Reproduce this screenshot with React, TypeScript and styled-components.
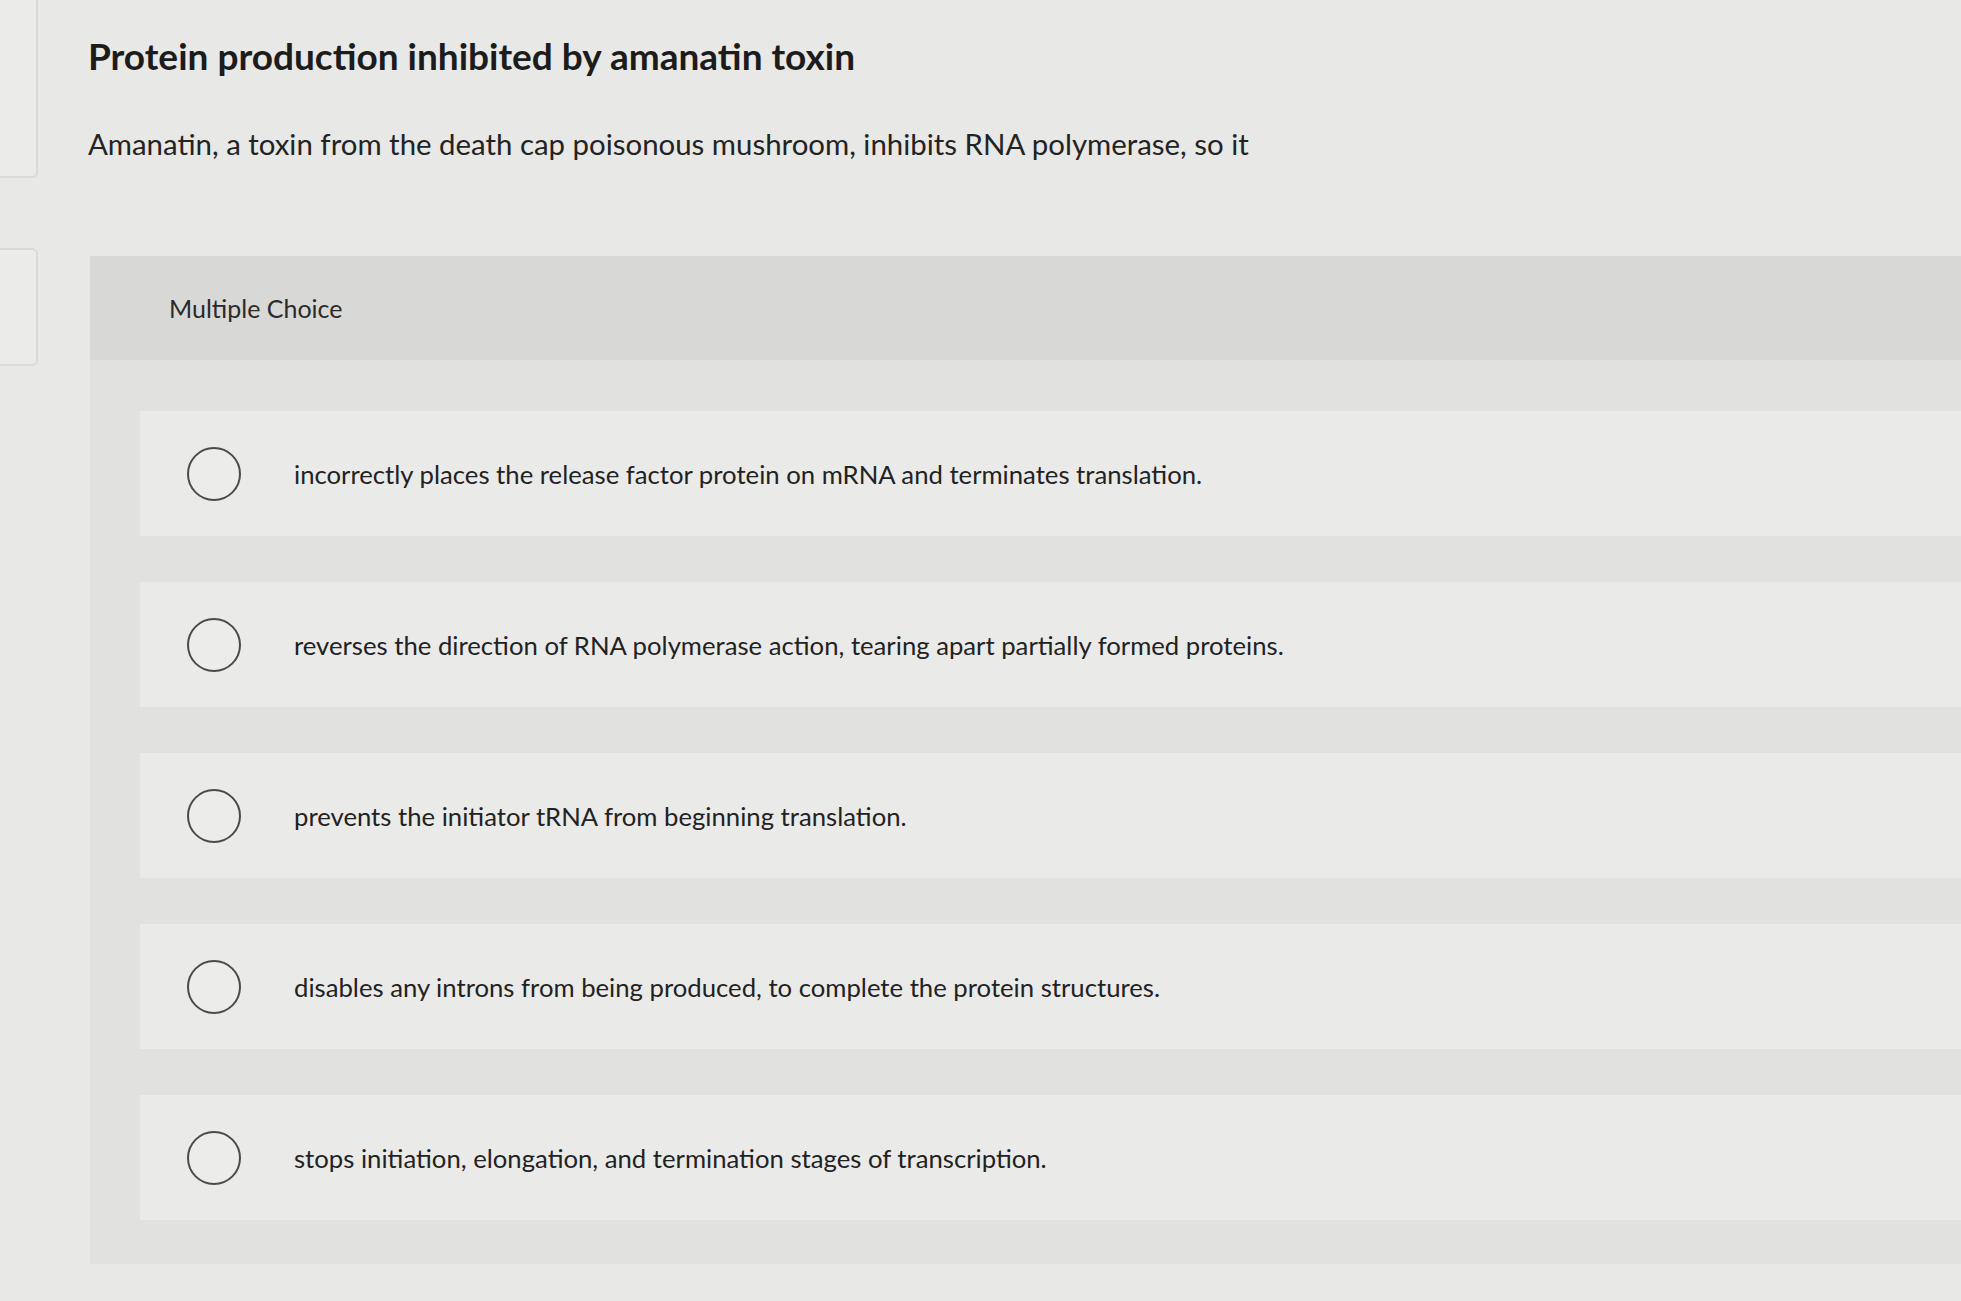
import React from "react";
import styled, { createGlobalStyle } from "styled-components";

const Global = createGlobalStyle`
  html, body { margin: 0; padding: 0; background: #e8e8e6; }
  body { font-family: "Lato", "Open Sans", sans-serif; color: #222; }
`;

const Page = styled.div`
  display: flex;
  min-height: 1301px;
  background: #e8e8e6;
  overflow: hidden;
`;

const Sidebar = styled.div`
  width: 38px;
  flex: none;
  display: flex;
  flex-direction: column;
  gap: 70px;
`;

const SideTab = styled.div<{ $h: number; $top?: number }>`
  height: ${(p) => p.$h}px;
  margin-top: ${(p) => p.$top ?? 0}px;
  margin-left: -8px;
  border: 2px solid #d9d9d7;
  border-left: none;
  border-radius: 0 6px 6px 0;
  background: #ebebe9;
`;

const Main = styled.div`
  flex: 1;
  padding-left: 50px;
  display: flex;
  flex-direction: column;
`;

const Title = styled.h1`
  margin: 34px 0 0;
  font-size: 37px;
  line-height: 44px;
  font-weight: 700;
  color: #1c1c1c;
`;

const Prompt = styled.p`
  margin: 48px 0 0;
  font-size: 29.4px;
  line-height: 36px;
  font-weight: 400;
  color: #232323;
`;

const Panel = styled.section`
  margin: 94px 0 0 2px;
  background: #e1e1e0;
  padding-bottom: 44px;
  display: flex;
  flex-direction: column;
`;

const PanelHeader = styled.div`
  height: 104px;
  background: #d8d8d7;
  display: flex;
  align-items: center;
  padding-left: 79px;
  font-size: 25px;
  color: #2a2a2a;
`;

const Options = styled.div`
  display: flex;
  flex-direction: column;
  gap: 46px;
  padding: 51px 0 0 50px;
`;

const Option = styled.label`
  height: 125px;
  background: #eaeae9;
  display: flex;
  align-items: center;
  padding-left: 47px;
  gap: 53px;
  cursor: pointer;
`;

const Radio = styled.span`
  width: 50px;
  height: 50px;
  flex: none;
  border-radius: 50%;
  border: 2px solid #4a4a4a;
  background: #ececeb;
`;

const OptionText = styled.span`
  font-size: 25.7px;
  line-height: 32px;
  color: #222;
`;

const choices = [
  "incorrectly places the release factor protein on mRNA and terminates translation.",
  "reverses the direction of RNA polymerase action, tearing apart partially formed proteins.",
  "prevents the initiator tRNA from beginning translation.",
  "disables any introns from being produced, to complete the protein structures.",
  "stops initiation, elongation, and termination stages of transcription.",
];

export default function App() {
  return (
    <>
      <Global />
      <Page>
        <Sidebar>
          <SideTab $h={180} $top={-6} />
          <SideTab $h={114} />
        </Sidebar>
        <Main>
          <Title>Protein production inhibited by amanatin toxin</Title>
          <Prompt>
            Amanatin, a toxin from the death cap poisonous mushroom, inhibits RNA polymerase, so it
          </Prompt>
          <Panel>
            <PanelHeader>Multiple Choice</PanelHeader>
            <Options>
              {choices.map((c) => (
                <Option key={c}>
                  <Radio />
                  <OptionText>{c}</OptionText>
                </Option>
              ))}
            </Options>
          </Panel>
        </Main>
      </Page>
    </>
  );
}
